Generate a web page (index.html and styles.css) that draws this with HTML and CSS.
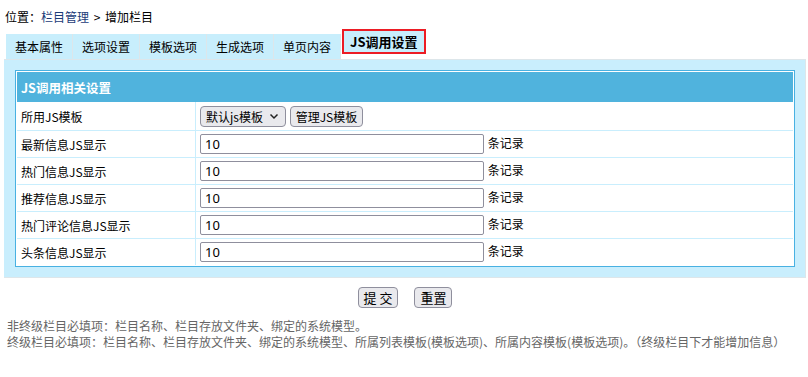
FILE: index.html
```html
<!DOCTYPE html>
<html lang="zh-CN">
<head>
    <meta charset="UTF-8">
    <title>增加栏目</title>
    <link rel="stylesheet" href="styles.css">
</head>
<body>
    <div class="crumb">位置：<a href="#">栏目管理</a> &gt; 增加栏目</div>

    <ul class="tabs">
        <li>基本属性</li>
        <li>选项设置</li>
        <li>模板选项</li>
        <li>生成选项</li>
        <li>单页内容</li>
        <li class="active">JS调用设置</li>
    </ul>

    <div class="panel">
        <table class="form-table">
            <tr><th colspan="2">JS调用相关设置</th></tr>
            <tr class="first">
                <td class="label">所用JS模板</td>
                <td>
                    <span class="select">默认js模板 <svg width="10" height="7" viewBox="0 0 10 7"><path d="M1.5 1.5l3.5 3.5 3.5-3.5" fill="none" stroke="#222" stroke-width="1.5"/></svg></span>
                    <button class="btn">管理JS模板</button>
                </td>
            </tr>
            <tr>
                <td class="label">最新信息JS显示</td>
                <td><input class="num" type="text" value="10"> 条记录</td>
            </tr>
            <tr>
                <td class="label">热门信息JS显示</td>
                <td><input class="num" type="text" value="10"> 条记录</td>
            </tr>
            <tr>
                <td class="label">推荐信息JS显示</td>
                <td><input class="num" type="text" value="10"> 条记录</td>
            </tr>
            <tr>
                <td class="label">热门评论信息JS显示</td>
                <td><input class="num" type="text" value="10"> 条记录</td>
            </tr>
            <tr class="last">
                <td class="label">头条信息JS显示</td>
                <td><input class="num" type="text" value="10"> 条记录</td>
            </tr>
        </table>
    </div>

    <div class="actions">
        <button class="btn">提 交</button>
        <button class="btn">重置</button>
    </div>

    <div class="notes">
        <p>非终级栏目必填项：栏目名称、栏目存放文件夹、绑定的系统模型。</p>
        <p>终级栏目必填项：栏目名称、栏目存放文件夹、绑定的系统模型、所属列表模板(模板选项)、所属内容模板(模板选项)。（终级栏目下才能增加信息）</p>
    </div>
</body>
</html>
```

FILE: styles.css
```css
body {
    margin: 0;
    font-family: "Noto Sans CJK SC", "Noto Sans", sans-serif;
    font-size: 12px;
    color: #000;
    background: #fff;
}
.crumb {
    padding: 8px 5px 0;
    line-height: 18px;
    word-spacing: 2px;
}
.crumb a {
    color: #1b3b78;
    text-decoration: none;
}
.tabs {
    list-style: none;
    margin: 3px 0 0;
    padding: 0 0 0 6px;
    display: flex;
    align-items: flex-start;
}
.tabs li {
    margin-top: 5px;
    height: 25px;
    line-height: 25px;
    padding: 0 9px;
    background: #c8eefc;
    border-right: 1px solid #dde6ea;
    font-size: 12px;
}
.tabs li.active {
    margin: 0 0 0 1px;
    height: 21px;
    line-height: 21px;
    padding: 0 6px;
    border: 2px solid #ec1c24;
    font-weight: bold;
    font-size: 13px;
}
.panel {
    margin: 0 2px 0 4px;
    padding: 10px 10px 10px 11px;
    background: #c9eefd;
    border-top: 1px solid #dde6ea;
    border-right: 1px solid #dde6ea;
    border-bottom: 1px solid #dde6ea;
}
.form-table {
    width: 100%;
    border: 1px solid #48b1e2;
    padding: 1px;
    background: #fff;
    border-spacing: 0;
}
.form-table th {
    height: 30px;
    padding: 0 4px;
    background: #50b3dd;
    color: #fff;
    text-align: left;
    font-size: 12.5px;
}
.form-table td {
    height: 26px;
    padding: 0 4px;
    border-bottom: 1px solid #c9eefd;
    white-space: nowrap;
}
.form-table tr.first td {
    height: 28px;
}
.form-table tr.last td {
    border-bottom: 0;
}
.form-table td.label {
    width: 170px;
    border-right: 1px solid #c9eefd;
}
.num {
    box-sizing: border-box;
    width: 284px;
    height: 20px;
    margin: 0 1px 0 0;
    padding: 0 4px;
    border: 1px solid #8f8f9d;
    border-radius: 2px;
    font-family: "Noto Sans", sans-serif;
    font-size: 13px;
    vertical-align: middle;
}
.select,
.btn {
    display: inline-flex;
    align-items: center;
    box-sizing: border-box;
    height: 21px;
    padding: 0 5px;
    background: #e9e9ed;
    border: 1px solid #8f8f9d;
    border-radius: 4px;
    font-family: "Noto Sans CJK SC", sans-serif;
    font-size: 12px;
    color: #000;
    vertical-align: middle;
}
.select {
    width: 86px;
    gap: 6px;
}
.select svg {
    flex-shrink: 0;
}
.btn {
    margin-left: 1px;
}
.actions {
    display: flex;
    justify-content: center;
    gap: 15px;
    margin-top: 9px;
    padding-left: 1px;
}
.actions .btn {
    padding: 0 5px;
    font-size: 13px;
}
.notes {
    margin-top: 10px;
    padding-left: 7px;
    color: #666;
}
.notes p {
    margin: 0;
    line-height: 16px;
}
```
